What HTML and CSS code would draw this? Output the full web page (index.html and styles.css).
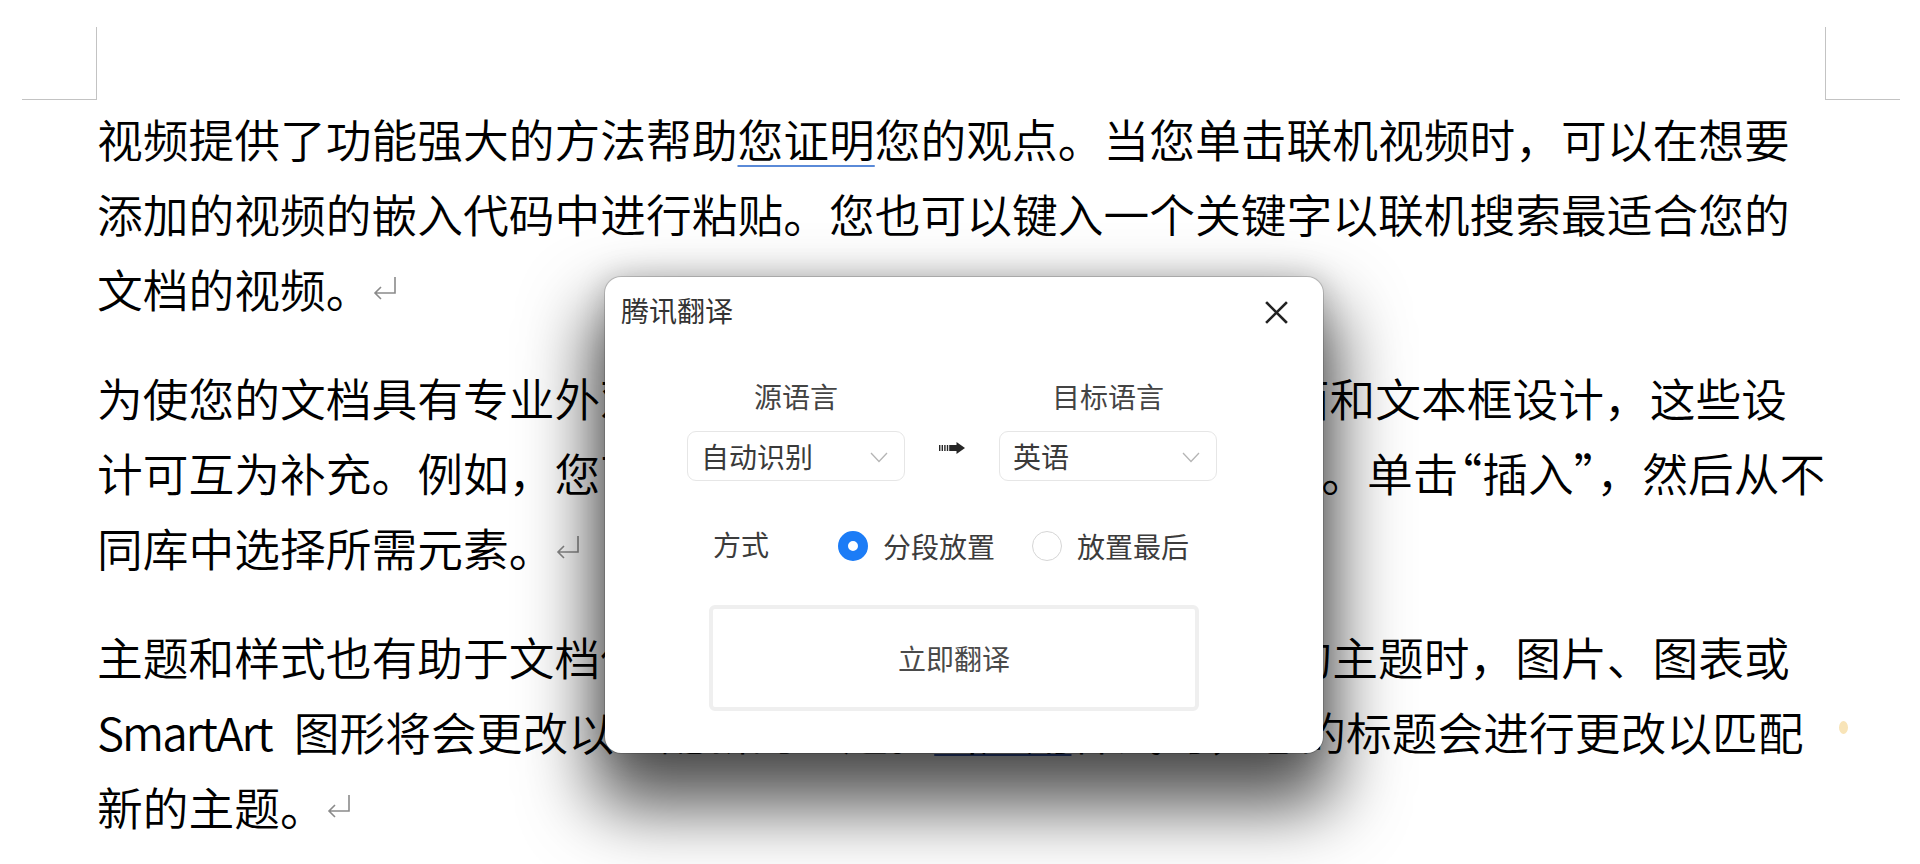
FILE: index.html
```html
<!DOCTYPE html>
<html lang="zh-CN">
<head>
<meta charset="utf-8">
<title>腾讯翻译</title>
<link rel="stylesheet" href="styles.css">
</head>
<body>
<div class="page">
  <div class="marks">
    <span class="mark mark-l"></span>
    <span class="mark mark-r"></span>
  </div>
  <div class="doc">
    <p class="para">视频提供了功能强大的方法帮助<span class="ul-blue">您证明</span>您的观点。当您单击联机视频时，可以在想要<br>添加的视频的嵌入代码中进行粘贴。您也可以键入一个关键字以联机搜索最适合您的<br>文档的视频。<svg class="ret" width="26" height="26" viewBox="0 0 26 26"><path d="M23 2 V18 H3 M9 12 L3 18 L9 24" fill="none" stroke="#8a8a8a" stroke-width="1.6"/></svg></p>
    <p class="para">为使您的文档具有专业外观，<span class="latin">Word</span>提供了页眉、页脚、封面和文本框设计，这些设<br>计可互为补充。例如，您可以添加匹配的封面<span class="squeeze">、</span>页眉和提要栏。单<span class="tight">击</span>“插入”，然后从不<br>同库中选择所需元素。<svg class="ret" width="26" height="26" viewBox="0 0 26 26"><path d="M23 2 V18 H3 M9 12 L3 18 L9 24" fill="none" stroke="#8a8a8a" stroke-width="1.6"/></svg></p>
    <p class="para">主题和样式也有助于文档保持协调。当您单击设计并选择新的主题时，图片、图表或<br><span class="latin-first">SmartArt</span>图形将会更改以匹配新的主题。<span class="ul-navy">当应用</span>样式时，您的标题会进行更改以匹配<br>新的主题。<svg class="ret" width="26" height="26" viewBox="0 0 26 26"><path d="M23 2 V18 H3 M9 12 L3 18 L9 24" fill="none" stroke="#8a8a8a" stroke-width="1.6"/></svg></p>
  </div>
</div>

<span class="float-dot"></span>

<div class="dialog">
  <div class="dlg-head">
    <span class="dlg-title">腾讯翻译</span>
    <svg class="dlg-close" width="23" height="23" viewBox="0 0 23 23"><path d="M2 2 L21 21 M21 2 L2 21" stroke="#222" stroke-width="2.6" stroke-linecap="square"/></svg>
  </div>
  <div class="langs">
    <div class="lang-label">源语言</div>
    <div class="lang-label lang-label-r">目标语言</div>
    <div class="select sel-l"><span>自动识别</span><svg class="chev" width="18" height="11" viewBox="0 0 18 11"><path d="M1 1 L9 9.5 L17 1" fill="none" stroke="#b5b5b5" stroke-width="1.3"/></svg></div>
    <div class="arrow"><svg width="26" height="12" viewBox="0 0 26 12"><g fill="#262626"><rect x="0" y="3" width="1.4" height="6"/><rect x="2.6" y="3" width="1.4" height="6"/><rect x="5.2" y="3" width="1.4" height="6"/><rect x="7.8" y="3" width="1.4" height="6"/><rect x="10.2" y="3" width="9" height="6"/><path d="M17.5 0 L26 6 L17.5 12 Z"/></g></svg></div>
    <div class="select sel-r"><span>英语</span><svg class="chev" width="18" height="11" viewBox="0 0 18 11"><path d="M1 1 L9 9.5 L17 1" fill="none" stroke="#b5b5b5" stroke-width="1.3"/></svg></div>
  </div>
  <div class="mode">
    <span class="mode-label">方式</span>
    <span class="radio radio-on"><span class="dot"></span>分段放置</span>
    <span class="radio"><span class="dot"></span>放置最后</span>
  </div>
  <div class="btn">立即翻译</div>
</div>
</body>
</html>
```

FILE: styles.css
```css
html, body {
  margin: 0;
  padding: 0;
  background: #ffffff;
}

body {
  width: 1920px;
  height: 864px;
  overflow: hidden;
  position: relative;
  font-family: "Noto Sans CJK SC", "Noto Sans", sans-serif;
}

.page {
  width: 1920px;
}

.marks {
  display: flex;
  justify-content: space-between;
  box-sizing: border-box;
  height: 100px;
  padding: 27px 20px 0 22px;
}

.mark {
  display: block;
  box-sizing: border-box;
  width: 75px;
  height: 73px;
  border-bottom: 1px solid #c3c3c3;
}

.mark-l {
  border-right: 1px solid #c3c3c3;
}

.mark-r {
  border-left: 1px solid #c3c3c3;
}

.doc {
  padding: 1px 0 0 97px;
}

.para {
  margin: 0 0 34px 0;
  font-size: 45.75px;
  font-weight: 350;
  line-height: 75px;
  color: #000000;
  white-space: nowrap;
}

.latin {
  margin: 0 7px 0 15px;
}

.squeeze {
  letter-spacing: -11px;
}

.tight {
  letter-spacing: -22px;
}

.latin-first {
  letter-spacing: -2px;
  margin-right: 22px;
}

.ul-blue {
  text-decoration: underline;
  text-decoration-color: #5a8ad8;
  text-decoration-thickness: 2px;
  text-underline-offset: 7px;
}

.ul-navy {
  text-decoration: underline;
  text-decoration-color: #3b5cb3;
  text-decoration-thickness: 2px;
  text-underline-offset: 3px;
}

.ret {
  display: inline-block;
  vertical-align: 7px;
  margin-left: 0;
}

.float-dot {
  position: absolute;
  left: 1839px;
  top: 721px;
  width: 9px;
  height: 13px;
  border-radius: 50%;
  background: #f8e4b8;
}

/* dialog */
.dialog {
  position: absolute;
  left: 605px;
  top: 277px;
  width: 718px;
  height: 476px;
  box-sizing: border-box;
  background: #ffffff;
  border-radius: 16px;
  box-shadow: 0 0 0 1px rgba(0, 0, 0, 0.16), 0 0 30px rgba(0, 0, 0, 0.18), 0 42px 70px 12px rgba(0, 0, 0, 0.68);
  color: #3c3c3c;
  font-size: 28px;
  line-height: 28px;
}

.dlg-head {
  display: flex;
  align-items: center;
  justify-content: space-between;
  height: 66px;
  padding: 0 35px 0 16px;
}

.dlg-title {
  color: #333333;
}

.dlg-close {
  display: block;
  margin-top: 4px;
}

.langs {
  display: grid;
  grid-template-columns: 218px 94px 218px;
  grid-template-rows: 28px 50px;
  row-gap: 21px;
  margin: 39px 0 0 82px;
}

.lang-label {
  grid-column: 1;
  grid-row: 1;
  text-align: center;
  color: #444444;
}

.lang-label-r {
  grid-column: 3;
}

.select {
  grid-row: 2;
  display: flex;
  align-items: center;
  justify-content: space-between;
  box-sizing: border-box;
  height: 50px;
  padding: 0 16px 0 13px;
  border: 1px solid #e6e6e6;
  border-radius: 9px;
  color: #3a3a3a;
}

.sel-l {
  grid-column: 1;
}

.sel-r {
  grid-column: 3;
}

.chev {
  display: block;
  margin-top: 2px;
}

.arrow {
  grid-column: 2;
  grid-row: 2;
  display: flex;
  justify-content: center;
  align-items: flex-start;
  padding-top: 11px;
}

.arrow svg {
  display: block;
  margin-left: -1px;
}

.mode {
  display: flex;
  align-items: center;
  height: 30px;
  margin: 50px 0 0 108px;
  color: #3c3c3c;
}

.mode-label {
  margin-right: 69px;
  margin-top: -4px;
}

.radio {
  display: flex;
  align-items: center;
  margin-right: 37px;
}

.radio .dot {
  display: block;
  box-sizing: border-box;
  width: 30px;
  height: 30px;
  margin-right: 15px;
  border-radius: 50%;
  border: 1.5px solid #d6d6d6;
  background: #ffffff;
}

.radio-on .dot {
  border: 10px solid #1c7cf6;
}

.btn {
  display: flex;
  align-items: center;
  justify-content: center;
  box-sizing: border-box;
  width: 490px;
  height: 106px;
  margin: 44px 0 0 104px;
  border: 4px solid #efefef;
  border-radius: 6px;
  color: #4a4a4a;
}
```
